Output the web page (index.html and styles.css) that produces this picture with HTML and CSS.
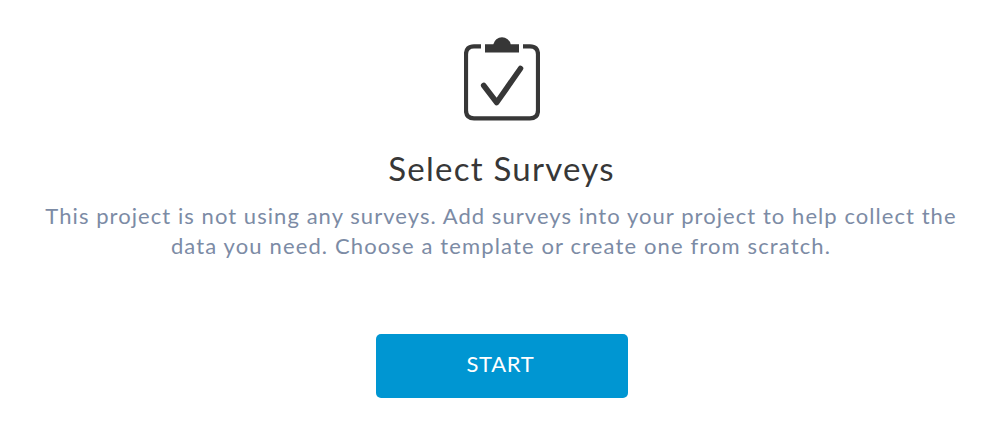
FILE: index.html
```html
<!DOCTYPE html>
<html lang="en">
<head>
<meta charset="UTF-8">
<meta name="viewport" content="width=device-width, initial-scale=1.0">
<title>Select Surveys</title>
<link rel="stylesheet" href="styles.css">
</head>
<body>
<div class="empty-state">
    <svg class="icon" width="76" height="86" viewBox="0 0 76 86" aria-hidden="true">
        <path d="M17 10.300H10Q2 10.300 2 18.300V74.300Q2 82.300 10 82.300H66Q74 82.300 74 74.300V18.300Q74 10.300 66 10.300H59" fill="none" stroke="#373737" stroke-width="4.200"/>
        <path d="M21 8.300H29.300A8.900 8.900 0 0 1 46.700 8.300H55V16.400H21Z" fill="#373737"/>
        <path d="M19.700 49.500L32.700 66.500L56.500 32.500" fill="none" stroke="#373737" stroke-width="5.600" stroke-linecap="round" stroke-linejoin="round"/>
    </svg>
    <h1 class="title">Select Surveys</h1>
    <p class="description">
        <span class="line first">This project is not using any surveys. Add surveys into your project to help collect the</span>
        <span class="line second">data you need. Choose a template or create one from scratch.</span>
    </p>
    <button class="start">START</button>
</div>
</body>
</html>
```

FILE: styles.css
```css
body {
    margin: 0;
    background-color: #fff;
    font-family: Lato, sans-serif;
}
.empty-state {
    display: flex;
    flex-direction: column;
    align-items: center;
    padding: 36px 2px 0 0;
}
.icon {
    display: block;
}
.title {
    margin: 24px 1px 0 0;
    color: #373737;
    font-size: 33px;
    font-weight: 400;
    line-height: 44px;
    letter-spacing: 1.25px;
}
.description {
    margin: 11px 2px 0 0;
    color: #7c8ba5;
    font-size: 22px;
    line-height: 30px;
    text-align: center;
}
.line {
    display: block;
    white-space: nowrap;
}
.first {
    letter-spacing: 1.06px;
}
.second {
    letter-spacing: 1.13px;
}
.start {
    width: 252px;
    height: 64px;
    margin-top: 73px;
    padding: 0 3px 5px 0;
    border: none;
    border-radius: 5px;
    background-color: #0096d2;
    color: #fff;
    font-family: inherit;
    font-size: 22px;
    letter-spacing: 0.7px;
}
```
